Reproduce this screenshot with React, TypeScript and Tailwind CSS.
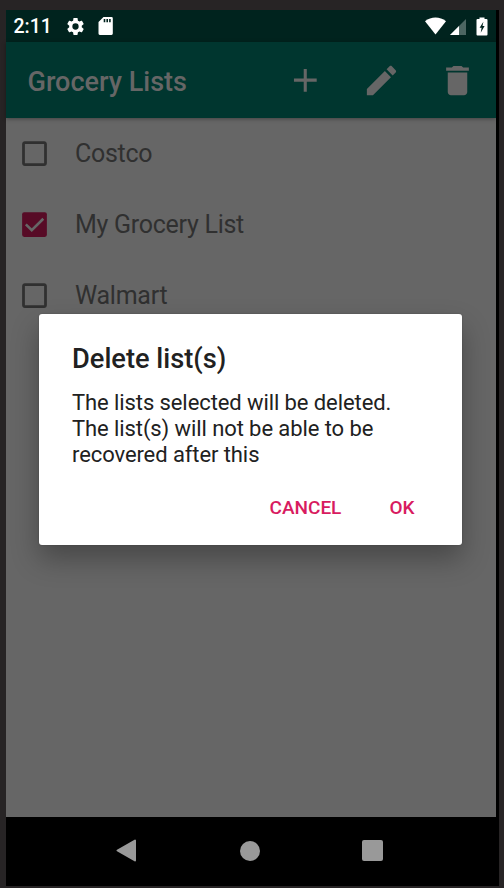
import type { ReactNode } from "react";

const lists = [
  { name: "Costco", checked: false },
  { name: "My Grocery List", checked: true },
  { name: "Walmart", checked: false },
];

function ToolIcon({ d, label }: { d: string; label: string }) {
  return (
    <button aria-label={label} className="flex h-[76px] w-[76px] items-center justify-center">
      <svg viewBox="0 0 24 24" className="size-[39px] fill-[#666666]">
        <path d={d} />
      </svg>
    </button>
  );
}

function StatusBar() {
  return (
    <div className="flex h-8 shrink-0 items-center bg-[#00231e] pr-[8.500px] pl-[7.500px] text-white">
      <span className="mt-[2px] w-[50.500px] text-[19.500px] leading-[30px] font-medium">2:11</span>
      <svg viewBox="0 0 24 24" className="ml-[1px] size-[21px] fill-white">
        <path d="M19.14 12.94c.04-.3.06-.61.06-.94 0-.32-.02-.64-.07-.94l2.03-1.58c.18-.14.23-.41.12-.61l-1.92-3.32c-.12-.22-.37-.29-.59-.22l-2.39.96c-.5-.38-1.03-.7-1.62-.94l-.36-2.54c-.04-.24-.24-.41-.48-.41h-3.84c-.24 0-.43.17-.47.41l-.36 2.54c-.59.24-1.13.57-1.62.94l-2.39-.96c-.22-.08-.47 0-.59.22L2.74 8.87c-.12.21-.08.47.12.61l2.03 1.58c-.05.3-.09.63-.09.94s.02.64.07.94l-2.03 1.58c-.18.14-.23.41-.12.61l1.92 3.32c.12.22.37.29.59.22l2.39-.96c.5.38 1.03.7 1.62.94l.36 2.54c.05.24.24.41.48.41h3.84c.24 0 .44-.17.47-.41l.36-2.54c.59-.24 1.13-.56 1.62-.94l2.39.96c.22.08.47 0 .59-.22l1.92-3.32c.12-.22.07-.47-.12-.61l-2.01-1.58zM12 15.6A3.6 3.6 0 1 1 12 8.4a3.6 3.6 0 0 1 0 7.2z" />
      </svg>
      <svg viewBox="0 0 15 18" className="ml-[12px] h-[18px] w-[15px] fill-white">
        <path d="M5.500 0H13.500a1.300 1.300 0 0 1 1.300 1.300V16.600a1.300 1.300 0 0 1-1.300 1.300H1.800a1.300 1.300 0 0 1-1.300-1.300V5zM5.700 2v3.300h1.600V2zM8.400 2v3.300H10V2zM11.100 2v3.300h1.600V2z" fillRule="evenodd" />
      </svg>
      <svg viewBox="0 0 21 18" className="ml-auto h-[18px] w-[21px] fill-white">
        <path d="M0 4.200C6 -.6 15 -.6 21 4.200L10.500 17.500z" />
      </svg>
      <svg viewBox="0 0 16 16" className="mt-[1px] ml-[4px] size-4">
        <path d="M0 16L16 0V16z" fill="#4d6662" />
        <path d="M0 16L9 7V16z" fill="#ffffff" />
      </svg>
      <svg viewBox="0 0 12 19" className="ml-[9.500px] h-[19px] w-3">
        <path d="M3.500 0.500h5v1.500H10.500a1 1 0 0 1 1 1V17.500a1 1 0 0 1-1 1H1.500a1 1 0 0 1-1-1V3a1 1 0 0 1 1-1H3.500z" fill="#ffffff" />
        <path d="M7.400 4.800L3.600 10.700H5.600L4.700 15.800L8.600 9.100H6.500z" fill="#00231e" />
      </svg>
    </div>
  );
}

function Checkbox({ checked }: { checked: boolean }) {
  return (
    <svg viewBox="0 0 24 24" className={checked ? "size-[33px] fill-[#570b26]" : "size-[33px] fill-[#303030]"}>
      {checked ? (
        <>
          <rect x="3" y="3" width="18" height="18" rx="1.500" />
          <path d="M5.700 11.900L10 16.200L18.400 7.800" fill="none" stroke="#666666" strokeWidth="1.900" />
        </>
      ) : (
        <path d="M19 5v14H5V5h14m0-2H5c-1.100 0-2 .9-2 2v14c0 1.100.9 2 2 2h14c1.100 0 2-.9 2-2V5c0-1.100-.9-2-2-2z" />
      )}
    </svg>
  );
}

function DialogButton({ children }: { children: ReactNode }) {
  return <button className="text-[19px] leading-6 font-medium text-[#d81b60]">{children}</button>;
}

export default function App() {
  return (
    <div className="relative h-[888px] w-[504px] overflow-hidden bg-[#272425] pt-[10px] pl-[6px] font-['Roboto',sans-serif]">
      <div className="flex h-[876px] w-[493px] flex-col bg-black">
        <div className="flex h-[807px] w-[490px] flex-col bg-[#666666]">
          <StatusBar />
          <header className="z-10 flex h-[76px] shrink-0 items-center bg-[#00362f] pl-[21.500px] shadow-[0_1px_4px_rgba(0,0,0,0.35)]">
            <h1 className="mt-[4px] text-[27px] leading-8 font-medium text-[#666666]">Grocery Lists</h1>
            <div className="mr-[1px] ml-auto flex">
              <ToolIcon label="Add" d="M18.900 12.700h-6.100v6.200h-1.900v-6.200H4.900v-1.900h6V4.900h1.900v5.900h6.100z" />
              <ToolIcon label="Edit" d="M3 17.250V21h3.750L17.810 9.940l-3.750-3.750L3 17.250zM20.710 7.040c.39-.39.39-1.020 0-1.410l-2.340-2.340c-.39-.39-1.020-.39-1.410 0l-1.830 1.830 3.750 3.750 1.830-1.830z" />
              <ToolIcon label="Delete" d="M6 19c0 1.100.9 2 2 2h8c1.100 0 2-.9 2-2V7H6v12zM19 4h-3.500l-1-1h-5l-1 1H5v2h14V4z" />
            </div>
          </header>
          <main>
            {lists.map((list) => (
              <div key={list.name} className="flex h-[71px] items-center pl-[11.500px]">
                <Checkbox checked={list.checked} />
                <span className="ml-[24.500px] text-[25px] leading-8 tracking-[-0.27px] text-[#303030]">{list.name}</span>
              </div>
            ))}
          </main>
        </div>
        <nav className="flex h-[67px] items-center pl-[110px]">
          <svg viewBox="0 0 21 23" className="h-[23px] w-[21px]">
            <path d="M1.500 11.500L19 1.500V21.500z" fill="#999999" stroke="#999999" strokeWidth="2" strokeLinejoin="round" />
          </svg>
          <div className="ml-[103px] size-[20px] rounded-full bg-[#999999]" />
          <div className="ml-[102px] size-[21px] rounded-[2px] bg-[#999999]" />
        </nav>
      </div>
      <div
        role="dialog"
        className="absolute top-[314px] left-[39px] z-20 h-[231px] w-[422.500px] rounded-[3px] bg-white pt-[29px] pl-[33px] shadow-[0_14px_28px_rgba(0,0,0,0.3),0_0_2px_rgba(0,0,0,0.2)]"
      >
        <h2 className="text-[27.250px] leading-8 font-medium text-[#212121]">Delete list(s)</h2>
        <p className="mt-[15px] text-[22px] leading-[26px] tracking-[-0.09px] text-[#212121]">
          The lists selected will be deleted.
          <br />
          The list(s) will not be able to be
          <br />
          recovered after this
        </p>
        <div className="mt-[28px] flex justify-end gap-[48px] pr-[47px]">
          <DialogButton>CANCEL</DialogButton>
          <DialogButton>OK</DialogButton>
        </div>
      </div>
    </div>
  );
}
